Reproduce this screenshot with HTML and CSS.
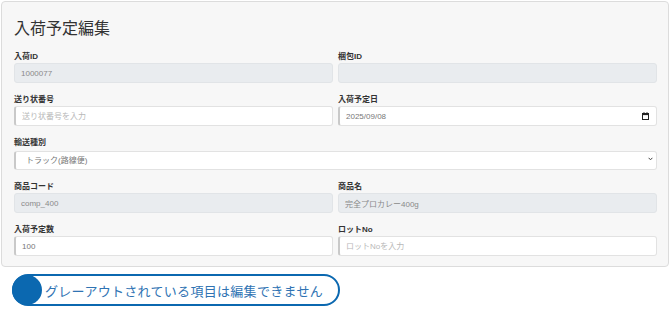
FILE: index.html
```html
<!DOCTYPE html>
<html lang="ja">
<head>
    <meta charset="UTF-8">
    <meta name="viewport" content="width=device-width, initial-scale=1.0">
    <title>入荷予定編集</title>
    <link rel="stylesheet" href="styles.css">
</head>
<body>
    <div class="card">
        <h2 class="title">入荷予定編集</h2>
        <form class="form-grid">
            <div class="field">
                <label for="arrivalId">入荷ID</label>
                <input type="text" id="arrivalId" class="control" value="1000077" disabled>
            </div>
            <div class="field">
                <label for="packageId">梱包ID</label>
                <input type="text" id="packageId" class="control" value="" disabled>
            </div>

            <div class="field">
                <label for="slipNo">送り状番号</label>
                <input type="text" id="slipNo" class="control" placeholder="送り状番号を入力">
            </div>
            <div class="field">
                <label for="arrivalDate">入荷予定日</label>
                <div class="control date-control">
                    <span id="arrivalDate">2025/09/08</span>
                    <svg class="calendar-icon" width="7" height="8" viewBox="0 0 7 8">
                        <rect x="0.5" y="1.5" width="6" height="6" fill="none" stroke="#222" stroke-width="1"/>
                        <rect x="0.5" y="1.5" width="6" height="1.6" fill="#222"/>
                        <rect x="1.5" y="0.2" width="1" height="1.5" fill="#222"/>
                        <rect x="4.5" y="0.2" width="1" height="1.5" fill="#222"/>
                    </svg>
                </div>
            </div>

            <div class="field wide">
                <label for="transport">輸送種別</label>
                <div class="select-wrap">
                    <select id="transport" class="control select-control">
                        <option>トラック(路線便)</option>
                        <option>チャーター便</option>
                        <option>宅配便</option>
                    </select>
                    <svg class="chevron" width="5" height="4" viewBox="0 0 5 4">
                        <path d="M0.6 0.8 L2.5 2.8 L4.4 0.8" fill="none" stroke="#444" stroke-width="1"/>
                    </svg>
                </div>
            </div>

            <div class="field">
                <label for="itemCode">商品コード</label>
                <input type="text" id="itemCode" class="control" value="comp_400" disabled>
            </div>
            <div class="field">
                <label for="itemName">商品名</label>
                <input type="text" id="itemName" class="control" value="完全プロカレー400g" disabled>
            </div>

            <div class="field">
                <label for="quantity">入荷予定数</label>
                <input type="text" id="quantity" class="control" value="100">
            </div>
            <div class="field">
                <label for="lotNo">ロットNo</label>
                <input type="text" id="lotNo" class="control" placeholder="ロットNoを入力">
            </div>
        </form>
    </div>

    <div class="notice">
        <span class="notice-dot"></span>
        <span class="notice-text">グレーアウトされている項目は編集できません</span>
    </div>
</body>
</html>
```

FILE: styles.css
```css
* {
    margin: 0;
    padding: 0;
    box-sizing: border-box;
    font-family: 'Liberation Sans', 'Noto Sans CJK JP', sans-serif;
}

body {
    background: #ffffff;
    padding: 1px;
}

.card {
    width: 668px;
    background: #f7f7f7;
    border: 1px solid #dcdcdc;
    border-radius: 4px;
    padding: 17px 11px 10px 12px;
}

.title {
    font-size: 16px;
    line-height: 20px;
    font-weight: normal;
    color: #333;
    margin-bottom: 13px;
}

.form-grid {
    display: grid;
    grid-template-columns: 1fr 1fr;
    column-gap: 5px;
    row-gap: 12px;
}

.field {
    display: flex;
    flex-direction: column;
}

.field.wide {
    grid-column: 1 / 3;
}

label {
    font-size: 8px;
    line-height: 10px;
    font-weight: bold;
    color: #333;
    margin-bottom: 1px;
}

.control {
    width: 100%;
    height: 20px;
    padding: 0 6px;
    font-size: 8px;
    color: #777;
    background: #fff;
    border: 1px solid #e2e2e2;
    border-left: 2px solid #c9c9c9;
    border-radius: 3px;
    outline: none;
}

.control::placeholder {
    color: #b8b8b8;
}

.control:disabled {
    background: #e9ecef;
    border: 1px solid #e1e4e7;
    color: #8a8a8a;
}

.date-control {
    display: flex;
    align-items: center;
    justify-content: space-between;
    padding-right: 7px;
}

.select-wrap {
    position: relative;
}

.select-control {
    appearance: none;
    padding-left: 10px;
    height: 19px;
}

.chevron {
    position: absolute;
    right: 4px;
    top: 8px;
    pointer-events: none;
}

.notice {
    display: flex;
    align-items: center;
    width: 328px;
    height: 32px;
    margin: 7px 0 0 11px;
    border: 2px solid #0b68b0;
    border-radius: 16px;
    background: #fff;
}

.notice-dot {
    width: 30px;
    height: 30px;
    margin-left: -2px;
    border-radius: 50%;
    background: #0b68b0;
    flex-shrink: 0;
}

.notice-text {
    margin-left: 3px;
    font-family: 'Noto Sans CJK JP', sans-serif;
    font-size: 13px;
    letter-spacing: 0.3px;
    color: #2f73b3;
}
```
